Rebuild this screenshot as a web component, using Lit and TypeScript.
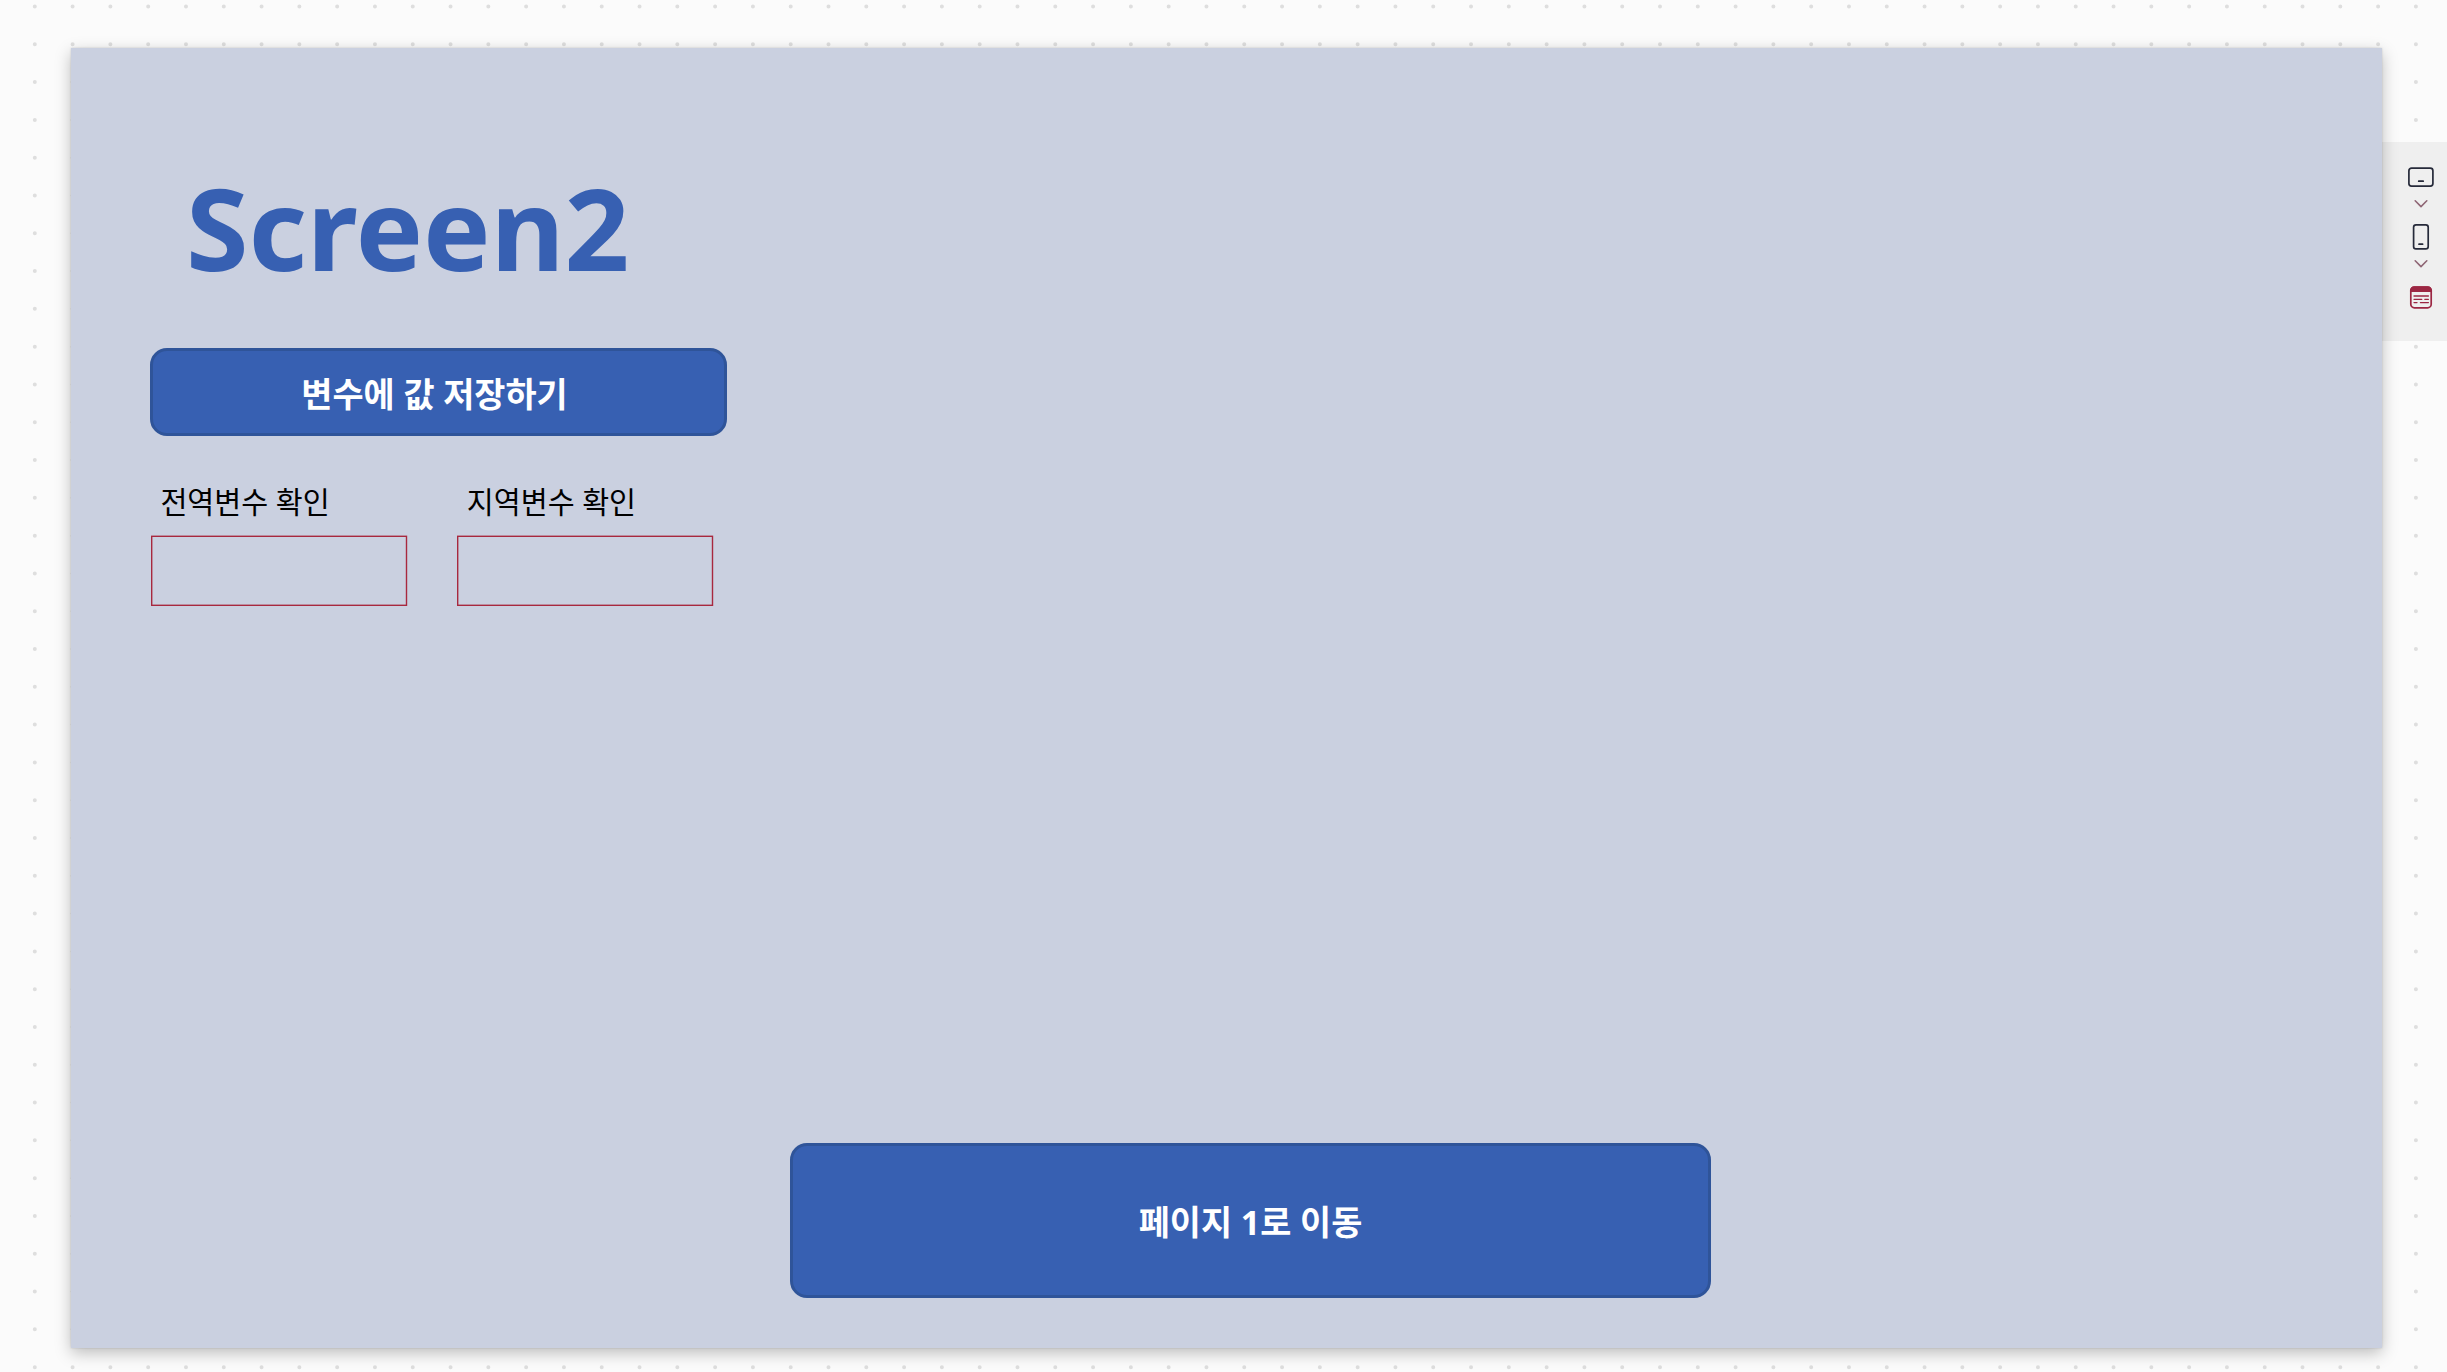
import { LitElement, html, css, svg } from 'lit';
import { customElement, property } from 'lit/decorators.js';

// 1cm in CSS pixels, the spacing of the dot grid
const GRID = 37.7953;
const GRID_ROWS = 37;

@customElement('canvas-button')
export class CanvasButton extends LitElement {
  static styles = css`
    :host {
      display: block;
    }
    .button {
      display: flex;
      align-items: center;
      justify-content: center;
      box-sizing: border-box;
      width: 100%;
      height: 100%;
      margin: 0;
      padding: var(--button-padding, 0);
      border: 3px solid #2f5499;
      border-radius: 17px;
      background: #3760b2;
      color: #fff;
      font: 700 33.8px/50px 'Noto Sans', 'Noto Sans CJK KR', sans-serif;
      white-space: nowrap;
    }
  `;

  @property({ type: String })
  label = '';

  render() {
    return html`<button class="button">${this.label}</button>`;
  }
}

@customElement('variable-field')
export class VariableField extends LitElement {
  static styles = css`
    :host {
      display: flex;
      flex-direction: column;
      width: 257px;
    }
    .label {
      height: 56px;
      padding-left: 9.4px;
      color: #000;
      font: 400 29.3px/42px 'Noto Sans CJK KR', sans-serif;
      word-spacing: 1px;
      white-space: nowrap;
    }
    .value {
      display: block;
      fill: none;
      stroke: #a8283f;
      stroke-width: 1.4;
    }
  `;

  @property({ type: String })
  label = '';

  render() {
    return html`
      <div class="label">${this.label}</div>
      <svg class="value" width="257" height="71" viewBox="0 0 257 71">
        <rect x="0.7" y="1.3" width="254.8" height="69" />
      </svg>
    `;
  }
}

@customElement('device-rail')
export class DeviceRail extends LitElement {
  static styles = css`
    :host {
      display: flex;
      flex-direction: column;
      align-items: center;
      box-sizing: border-box;
      width: 65px;
      height: 199px;
      padding: 24px 0 0 13px;
      background: #efefef;
    }
    svg {
      display: block;
      flex: none;
      fill: none;
      stroke: #262a3a;
      stroke-width: 1.7;
      stroke-linecap: round;
      stroke-linejoin: round;
    }
    .chevron {
      stroke: #8f6675;
      stroke-width: 1.6;
      margin: 11px 0 14px;
    }
    .chevron.lower {
      margin: 8px 0 16px;
    }
    .form {
      stroke: #9c2743;
    }
    .solid {
      fill: #9c2743;
    }
  `;

  private _chevron(name: string) {
    return svg`<svg class=${name} width="14" height="10" viewBox="0 0 14 10">
      <path d="M1.2 1.8 L7 7.6 L12.8 1.8" />
    </svg>`;
  }

  render() {
    return html`
      <svg width="28" height="22" viewBox="0 0 28 22">
        <rect x="1.9" y="2.1" width="24" height="18" rx="2.6" />
        <path d="M11.7 15.2 H16.2" />
      </svg>
      ${this._chevron('chevron')}
      <svg width="18" height="28" viewBox="0 0 18 28">
        <rect x="1.6" y="1.9" width="14.6" height="24" rx="2.4" />
        <path d="M7 21.2 H10.6" />
      </svg>
      ${this._chevron('chevron lower')}
      <svg class="form" width="24" height="24" viewBox="0 0 24 24">
        <rect x="1.8" y="2" width="20.4" height="20.8" rx="3.6" />
        <path class="solid" d="M1.8 6.2 V5.6 A3.6 3.6 0 0 1 5.4 2 H18.6 A3.6 3.6 0 0 1 22.2 5.6 V6.2 Z" />
        <path d="M5 11 H19.4 M5 14.3 H12.8 M15.8 14.3 H19.4 M5 17.6 H8 M11.4 17.6 H19.4" stroke-width="1.3" />
      </svg>
    `;
  }
}

@customElement('app-root')
export class AppRoot extends LitElement {
  static styles = css`
    :host {
      display: grid;
      width: 2447px;
      height: 1372px;
      overflow: hidden;
      background: #fbfbfb;
    }
    .dots,
    .stage {
      grid-area: 1 / 1;
    }
    .dots {
      display: block;
      fill: none;
      stroke: #dedede;
      stroke-width: 4;
      stroke-linecap: round;
    }
    .stage {
      display: flex;
      align-items: flex-start;
      padding: 48px 0 0 71px;
    }
    .board {
      display: flex;
      flex-direction: column;
      box-sizing: border-box;
      position: relative;
      z-index: 1;
      flex: none;
      width: 2311px;
      height: 1300px;
      padding: 102px 79px 50px;
      background: #cad0e0;
      box-shadow: 0 5px 15px rgba(0, 0, 0, 0.25), 0 0 2px rgba(0, 0, 0, 0.15);
    }
    .title {
      margin: 0 0 44px;
      padding-left: 36px;
      height: 154px;
      color: #3760b2;
      font: 700 113.4px/154px 'Noto Sans', sans-serif;
    }
    .save {
      width: 577px;
      height: 88px;
      --button-padding: 3px 8px 0 0;
    }
    .fields {
      display: flex;
      gap: 49.4px;
      margin-top: 43px;
      padding-left: 1px;
    }
    .move {
      width: 921px;
      height: 155px;
      margin: auto 0 0 640px;
      --button-padding: 2px 0 0;
    }
    .rail {
      flex: none;
      margin-top: 94px;
    }
  `;

  // One dashed line per row: zero-length dashes with round caps come out as dots.
  private _dotRow(row: number) {
    const y = 6.5 + row * GRID;
    return svg`<path d="M34.8 ${y} H2440" stroke-dasharray="0 ${GRID}" />`;
  }

  render() {
    const rows = Array.from({ length: GRID_ROWS }, (_, i) => i);
    return html`
      <svg class="dots" width="2447" height="1372" viewBox="0 0 2447 1372">
        ${rows.map((row) => this._dotRow(row))}
      </svg>
      <div class="stage">
        <main class="board">
          <h1 class="title">Screen2</h1>
          <canvas-button class="save" label="변수에 값 저장하기"></canvas-button>
          <div class="fields">
            <variable-field label="전역변수 확인"></variable-field>
            <variable-field label="지역변수 확인"></variable-field>
          </div>
          <canvas-button class="move" label="페이지 1로 이동"></canvas-button>
        </main>
        <device-rail class="rail"></device-rail>
      </div>
    `;
  }
}

declare global {
  interface HTMLElementTagNameMap {
    'app-root': AppRoot;
    'canvas-button': CanvasButton;
    'variable-field': VariableField;
    'device-rail': DeviceRail;
  }
}
